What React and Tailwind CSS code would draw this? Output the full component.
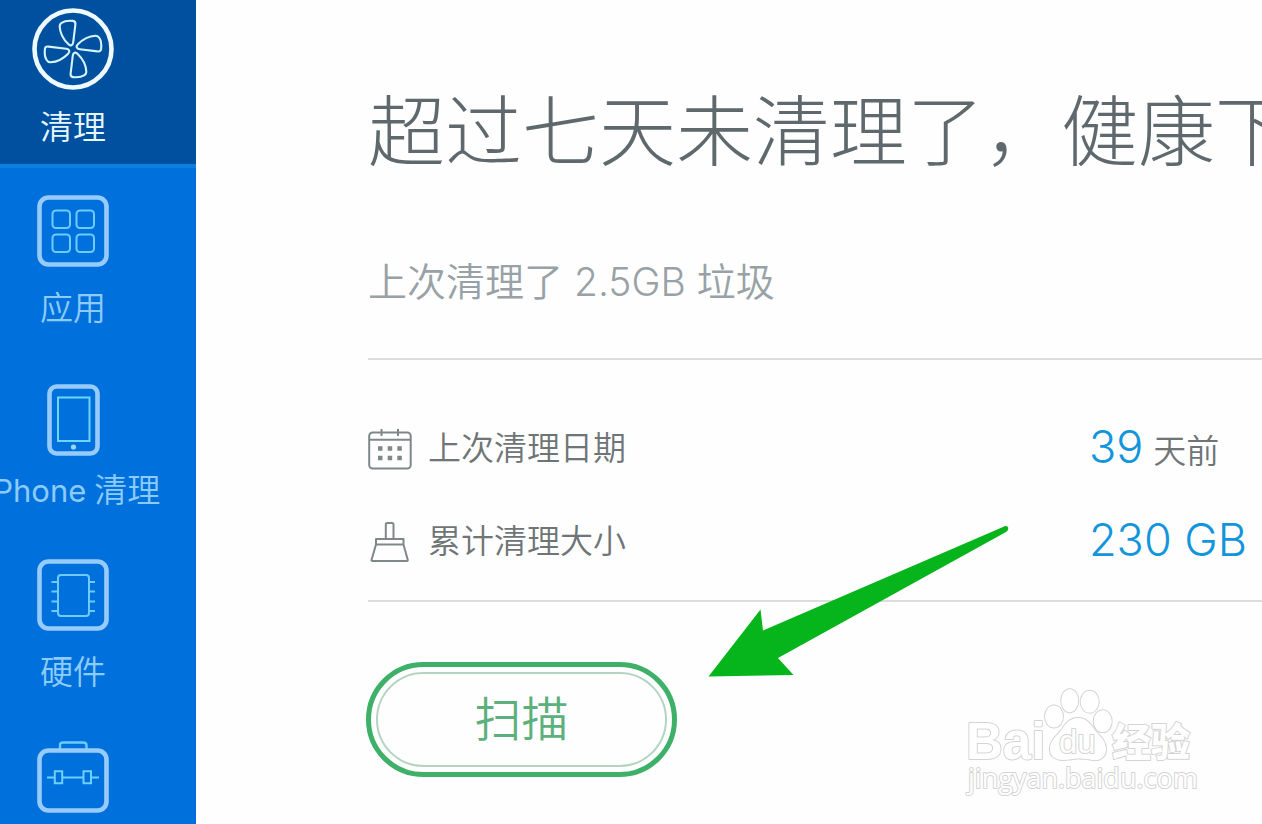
function Icon({ children }) {
  return (
    <svg width="72" height="80" viewBox="0 0 72 80" fill="none" className="shrink-0" aria-hidden="true">
      {children}
    </svg>
  );
}

function Frame() {
  return <rect x="2.5" y="2.5" width="67" height="67" rx="9" stroke="#97cbfb" strokeWidth="4.6" />;
}

function FanIcon() {
  const blade = "M30 14.6C32.5 12.9 37 12.5 41 12.9C43 13.1 43.6 14.5 43.4 16.5L41.2 34.3C40.8 37.4 38.5 38.4 36.3 36.1C31.5 31.5 28 25 27.7 18.5C27.6 16.5 28.5 15.5 30 14.6Z";
  return (
    <svg width="82" height="82" viewBox="0 0 82 82" fill="none" className="shrink-0" aria-hidden="true">
      <circle cx="41" cy="41" r="38.5" stroke="#effaff" strokeWidth="4.6" />
      <g stroke="#d5f4ff" strokeWidth="2.1">
        <path d={blade} />
        <path d={blade} transform="rotate(90 41 41)" />
        <path d={blade} transform="rotate(180 41 41)" />
        <path d={blade} transform="rotate(270 41 41)" />
      </g>
    </svg>
  );
}

function AppsIcon() {
  return (
    <Icon>
      <Frame />
      <g stroke="#6fcbfb" strokeWidth="2">
        <rect x="15.5" y="15.5" width="17.5" height="17.5" rx="3.5" />
        <rect x="39.5" y="15.5" width="17.5" height="17.5" rx="3.5" />
        <rect x="15.5" y="39.5" width="17.5" height="17.5" rx="3.5" />
        <rect x="39.5" y="39.5" width="17.5" height="17.5" rx="3.5" />
      </g>
    </Icon>
  );
}

function PhoneIcon() {
  return (
    <Icon>
      <rect x="12.5" y="9.5" width="48" height="67" rx="7" stroke="#97cbfb" strokeWidth="4.6" />
      <rect x="21" y="20.5" width="31.5" height="43.5" stroke="#6fd6fb" strokeWidth="2" />
      <circle cx="36.5" cy="70" r="2.6" fill="#97dcfb" />
    </Icon>
  );
}

function ChipIcon() {
  return (
    <Icon>
      <Frame />
      <rect x="21" y="16" width="31" height="41" rx="3" stroke="#6fcbfb" strokeWidth="2" />
      <path d="M14.5 23H21M14.5 32.5H21M14.5 42.5H21M14.5 52H21M52 23H58M52 32.5H58M52 42.5H58M52 52H58" stroke="#6fcbfb" strokeWidth="2" />
    </Icon>
  );
}

function ToolboxIcon() {
  return (
    <Icon>
      <path d="M23 8V4.5Q23 1.5 26 1.5H46Q49.5 1.5 49.5 4.5V8" stroke="#6fcbfb" strokeWidth="2.4" />
      <rect x="2.5" y="9.5" width="67" height="60" rx="9" stroke="#97cbfb" strokeWidth="4.6" />
      <path d="M10 36.5H17.5M26 36.5H46.5M54 36.5H62M17.8 30.2H25.2V42.3H17.8ZM46.5 30.2H54V42.3H46.5Z" stroke="#6fd0fb" strokeWidth="2" />
    </Icon>
  );
}

function NavItem({ icon, label, children }) {
  return (
    <button
      type="button"
      aria-label={label}
      className="flex w-full shrink-0 flex-col items-center pt-[27px] pr-[50px] pb-[21px] text-[#8ccbfb]"
    >
      {icon}
      <span className="mt-3 flex h-[42px] items-baseline gap-2 text-[33px] leading-[42px] whitespace-nowrap">{children}</span>
    </button>
  );
}

function CalendarIcon() {
  return (
    <svg width="44" height="42" viewBox="0 0 44 42" fill="none" stroke="#7f8889" strokeWidth="2" aria-hidden="true">
      <rect x="1.2" y="4.5" width="41.5" height="36" rx="3.5" />
      <path d="M1.2 11.8H42.7" />
      <path d="M13.5 1V8M30 1V8" />
      <path d="M10 20.5H14.5M19.7 20.5H24.2M29.3 20.5H33.8M10 30H14.5M19.7 30H24.2M29.3 30H33.8" strokeWidth="4.6" />
    </svg>
  );
}

function BroomIcon() {
  return (
    <svg width="44" height="42" viewBox="0 0 44 42" fill="none" stroke="#7f8889" strokeWidth="2" strokeLinejoin="round" aria-hidden="true">
      <path d="M17.8 17.5V3.5Q17.8 2 19.3 2H24Q25.5 2 25.5 3.5V17.5" />
      <path d="M8 18H35.5V23.5H8ZM8 23.5L3.5 39Q3.3 40 4.3 40H39Q40 40 39.8 39L35.5 23.5" />
    </svg>
  );
}

function Row({ icon, label, children }) {
  return (
    <div className="grid h-[93px] grid-cols-[721px_auto] items-center whitespace-nowrap">
      <dt className="flex items-center gap-4 text-[33px] text-[#6f7576]">
        {icon}
        {label}
      </dt>
      <dd className="flex items-baseline gap-2.5 pb-1 text-[45px] leading-[60px] font-light text-[#1295da]">
        {children}
      </dd>
    </div>
  );
}

function Arrow() {
  return (
    <svg width="304" height="156" viewBox="0 0 304 156" className="absolute top-[524px] left-[706px]" aria-hidden="true">
      <path d="M2.5 152.5L54.5 85.5L57 106.5L297 3Q300 1 302 3Q303 6 300 8L72 134L87.5 151Z" fill="#06b41b" />
    </svg>
  );
}

function Watermark() {
  return (
    <svg
      width="240"
      height="116"
      viewBox="0 0 240 116"
      className="absolute top-[684px] left-[962px]"
      fill="#ffffff"
      stroke="#d4d4d4"
      strokeWidth="2"
      strokeLinejoin="round"
      paintOrder="stroke"
      fontWeight="400"
      fontFamily="'Liberation Sans','Noto Sans CJK SC',sans-serif"
    >
      <text x="4" y="75" fontSize="51" fontWeight="700">Bai</text>
      <g>
        <ellipse cx="92" cy="32.5" rx="9" ry="11" />
        <ellipse cx="107.7" cy="16.7" rx="8.5" ry="11.5" />
        <ellipse cx="127.7" cy="17.7" rx="9" ry="11" />
        <ellipse cx="140.7" cy="37.3" rx="9" ry="11" />
        <path d="M116 34C124 34 128 39 132 45C137 52 144 56 144 65C144 73 138 77 131 76C125 75 121 74.5 116 74.5C111 74.5 107 76 101 76C93 76 87 72 88 63C89 55 95 52 100 45C104 39 108 34 116 34Z" />
      </g>
      <text x="97" y="69" fontSize="33">du</text>
      <text x="150" y="72" fontSize="39" fontWeight="900">经验</text>
      <text x="6" y="104" fontSize="27" fontFamily="'Open Sans','Noto Sans',sans-serif">jingyan.baidu.com</text>
    </svg>
  );
}

export default function App() {
  return (
    <div className="relative flex h-screen overflow-hidden bg-[#fefefe] font-['Inter','Noto_Sans_CJK_SC',sans-serif] font-[350]">
      <nav className="flex w-[196px] shrink-0 flex-col overflow-hidden bg-[#0071dc]">
        <button
          type="button"
          aria-current="page"
          className="flex w-full shrink-0 flex-col items-center border-b-4 border-[#0a80df] bg-[#0050a0] pt-2 pr-[50px] pb-4 text-[#e6f7ff]"
        >
          <FanIcon />
          <span className="mt-4 text-[33px] leading-[42px]">清理</span>
        </button>
        <NavItem icon={<AppsIcon />}>应用</NavItem>
        <NavItem icon={<PhoneIcon />}>
          <span className="text-[31px] font-normal">iPhone</span>
          <span>清理</span>
        </NavItem>
        <NavItem icon={<ChipIcon />}>硬件</NavItem>
        <NavItem icon={<ToolboxIcon />} label="工具箱" />
      </nav>

      <main className="min-w-0 flex-1 overflow-hidden pt-[82px] pl-[172px]">
        <h1 className="text-[77px] leading-[100px] font-light whitespace-nowrap text-[#5f696d]">超过七天未清理了，健康下</h1>
        <p className="mt-[72px] text-[39px] leading-[56px] whitespace-nowrap text-[#98a2a6]">上次清理了 2.5GB 垃圾</p>
        <dl className="mt-12 border-y-2 border-[#dcdcdc] pt-[42px] pb-3">
          <Row icon={<CalendarIcon />} label="上次清理日期">
            39 <span className="text-[33px] leading-none font-[350] text-[#6f7576]">天前</span>
          </Row>
          <Row icon={<BroomIcon />} label="累计清理大小">
            230 GB
          </Row>
        </dl>
        <button
          type="button"
          className="mt-[60px] -ml-0.5 h-[115px] w-[311px] rounded-full border-[5px] border-[#3fb067] p-[5px] text-[47px] text-[#5cb07c]"
        >
          <span className="flex h-full items-center justify-center rounded-full border-2 border-[#b3d4c0]">扫描</span>
        </button>
      </main>

      <Arrow />
      <Watermark />
    </div>
  );
}
